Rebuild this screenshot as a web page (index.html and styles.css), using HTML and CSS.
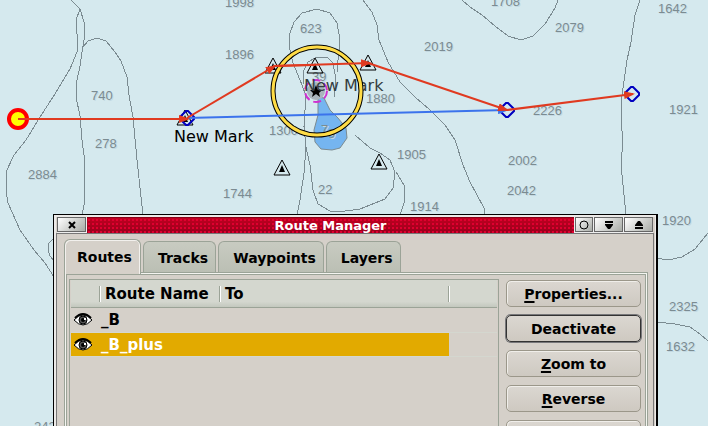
FILE: index.html
```html
<!DOCTYPE html>
<html lang="en">
<head>
<meta charset="utf-8">
<title>Route Manager</title>
<link rel="stylesheet" href="styles.css">
</head>
<body>
<svg class="chart" viewBox="0 0 708 426" preserveAspectRatio="xMinYMin slice" role="img" aria-label="Nautical chart">
  <defs>
    <marker id="head-red" viewBox="0 0 11 8" refX="9" refY="4" markerWidth="11" markerHeight="8" markerUnits="userSpaceOnUse" orient="auto"><path d="M0 0 11 4 0 8Z" fill="#e03a20"/></marker>
    <marker id="head-blue" viewBox="0 0 11 8" refX="9" refY="4" markerWidth="11" markerHeight="8" markerUnits="userSpaceOnUse" orient="auto"><path d="M0 0 11 4 0 8Z" fill="#3b73ec"/></marker>
    <g id="mark"><path class="mark-line" d="M0-8 8 7H-8Z"/><path d="M0-3 3 4H-3Z"/></g>
    <path id="waypoint" class="waypoint" d="M-1-7H1L7-1V1L1 7H-1L-7 1V-1Z"/>
    <g id="eye">
      <path d="M1 7Q10-3 19 7 10 17 1 7Z" fill="#fff" stroke="#000"/>
      <path d="M2 5Q10-3 18 5" fill="none" stroke="#000" stroke-width="2"/>
      <circle cx="10" cy="7" r="4" fill="#555" stroke="#000"/>
      <circle cx="10" cy="7" r="2"/>
      <path d="M11 5h2v2h-2Z" fill="#fff"/>
    </g>
  </defs>

  <path class="shoal" d="M318 97V115L314 130 315 142 321 149 332 150 340 148 347 138 346 128 338 118 330 110 324 98Z"/>
  <g class="contour">
    <path d="M71 0 80 9 76 20V28L78 40 77 52 70 69 55 94 40 117 26 140 14 155 6 172V190L8 203 20 230 34 250 45 263 54 277"/>
    <path d="M80 9 84 22V40L82 52 80 66 76 85V97L80 116 82 140 84 155V205L82 215"/>
    <path d="M83 47 88 41 97 38 106 41 115 52 121 61 127 77 129 95 133 117 137 160 143 215"/>
    <path d="M54 238 49 243 48 250 50 256 54 261"/>
    <path d="M306 96 302 85 293 63 289 45 290 33 294 22 302 13 317 9 330 13 337 23 340 40 338 60 337 72"/>
    <path d="M303 84V72L308 62 317 57H327L333 63 336 80 334 97"/>
    <path d="M306 93 304 127 306 147 304 173 300 200 297 215"/>
    <path d="M306 147 310 165 313 190 318 204 330 211 338 212 360 209 385 199 393 188 395 172 390 160 380 153 370 148 355 135"/>
    <path d="M396 172 404 185V203L400 215"/>
    <path d="M363 0 372 12 377 25 379 40 388 62 400 82 415 97 430 110 445 125 455 140 463 165 470 182 484 208V215"/>
    <path d="M462 0 470 7 482 15 495 26 508 36 521 40 533 36 545 24 555 8 558 0"/>
    <path d="M640 0 635 15 631 42 627 60 623 88 621 105V122L623 140 621 165 624 195 626 215"/>
    <path d="M656 258 668 260 682 257 695 249 708 233"/>
    <path d="M656 322 675 324 690 327 700 334 708 341"/>
  </g>

  <g class="sounding">
    <text x="225" y="7">1998</text><text x="225" y="59">1896</text><text x="300" y="33">623</text>
    <text x="91" y="100">740</text><text x="95" y="148">278</text><text x="28" y="179">2884</text>
    <text x="223" y="198">1744</text><text x="318" y="194">22</text><text x="312" y="81">39</text>
    <text x="366" y="103">1880</text><text x="269" y="135">1300</text><text x="321" y="134">7</text>
    <text x="328" y="138">9</text><text x="397" y="159">1905</text><text x="410" y="211">1914</text>
    <text x="424" y="51">2019</text><text x="491" y="6">1708</text><text x="555" y="32">2079</text>
    <text x="658" y="13">1642</text><text x="533" y="115">2226</text><text x="669" y="114">1921</text>
    <text x="508" y="165">2002</text><text x="507" y="195">2042</text><text x="662" y="225">1920</text>
    <text x="669" y="311">2325</text><text x="666" y="351">1632</text><text x="34" y="431">2427</text>
  </g>

  <circle cx="316" cy="91" r="9" fill="#a9b5bc"/>
  <circle class="light" cx="316" cy="91" r="11"/>
  <path d="M316 85 318 90H322L319 93 320 97 316 94 312 97 313 93 310 90H314Z"/>
  <g class="mark-name"><text x="174" y="142">New Mark</text><text class="mark-name-dim" x="304" y="91">New Mark</text></g>

  <use href="#mark" x="273" y="66"/><use href="#mark" x="315" y="66"/><use href="#mark" x="368" y="63"/>
  <use href="#mark" x="282" y="168"/><use href="#mark" x="379" y="162"/><use href="#mark" x="185" y="118"/>
  <use href="#waypoint" x="187" y="118"/><use href="#waypoint" x="507" y="110"/><use href="#waypoint" x="632" y="94"/>

  <circle cx="317" cy="91" r="44" fill="none" stroke="#000" stroke-width="5"/>
  <circle cx="317" cy="91" r="44" fill="none" stroke="#ffdc46" stroke-width="3"/>
  <circle cx="18" cy="119" r="9" fill="#ff0" stroke="#f00" stroke-width="4"/>
  <path d="M187 118 507 110" stroke="#3b73ec" stroke-width="2" marker-end="url(#head-blue)"/>
  <g class="leg">
    <path d="M18 119H188"/><path d="M187 118 275 66"/><path d="M273 66 315 65"/>
    <path d="M273 66 370 63"/><path d="M368 63 507 110"/><path d="M507 110 633 94"/>
  </g>
</svg>

<main class="window">
  <header class="titlebar">
    <button class="win-btn" type="button" aria-label="Close"><svg width="8" height="8" viewBox="0 0 8 8"><path d="M1 1 7 7M7 1 1 7" stroke="#000" stroke-width="2"/></svg></button>
    <h1 class="title">Route Manager</h1>
    <button class="win-btn win-btn-small" type="button" aria-label="Stick"><svg width="10" height="10" viewBox="0 0 10 10"><circle cx="5" cy="5" r="4" fill="none" stroke="#000"/></svg></button>
    <button class="win-btn" type="button" aria-label="Minimize"><svg width="8" height="8" viewBox="0 0 8 8"><path d="M0 0H8V2H0ZM0 3H8V4L5 8H3L0 4Z"/></svg></button>
    <button class="win-btn" type="button" aria-label="Maximize"><svg width="8" height="8" viewBox="0 0 8 8"><path d="M0 6H8V8H0ZM0 5V4L3 0H5L8 4V5Z"/></svg></button>
  </header>
  <div class="body">
    <nav class="tabs" role="tablist">
      <button class="tab tab-active" type="button" role="tab" aria-selected="true">Routes</button>
      <button class="tab" type="button" role="tab">Tracks</button>
      <button class="tab" type="button" role="tab">Waypoints</button>
      <button class="tab" type="button" role="tab">Layers</button>
    </nav>
    <section class="pane">
      <div class="list">
        <table class="routes">
          <colgroup><col class="col-eye"><col class="col-name"><col class="col-to"><col></colgroup>
          <thead><tr><th></th><th>Route Name</th><th>To</th><th></th></tr></thead>
          <tbody>
            <tr><td><svg class="eye" width="20" height="14" viewBox="0 0 20 14"><use href="#eye"/></svg></td><td>_B</td><td></td><td></td></tr>
            <tr class="selected"><td><svg class="eye" width="20" height="14" viewBox="0 0 20 14"><use href="#eye"/></svg></td><td>_B_plus</td><td></td><td></td></tr>
          </tbody>
        </table>
      </div>
      <div class="actions">
        <button class="action" type="button"><u>P</u>roperties...</button>
        <button class="action action-default" type="button">Deactivate</button>
        <button class="action" type="button"><u>Z</u>oom to</button>
        <button class="action" type="button"><u>R</u>everse</button>
        <button class="action" type="button" aria-label="More"></button>
      </div>
    </section>
  </div>
</main>
</body>
</html>
```
FILE: styles.css
```css
* { box-sizing: border-box; }

body {
  position: relative;
  margin: 0;
  height: 100vh;
  overflow: hidden;
  background: #d5e9ee;
  color: #000;
  font-family: "DejaVu Sans", sans-serif;
}

button { padding: 0; color: inherit; font: inherit; }

/* Chart */
.chart { display: block; width: 100%; height: 100%; }
.contour { fill: none; stroke: #7b8b91; stroke-width: 1; shape-rendering: crispEdges; }
.shoal { fill: #75b5f0; stroke: #7b8b91; }
.sounding {
  fill: #7b8b91;
  font: 13px "Liberation Sans", sans-serif;
  text-shadow: 1px 1px 0 #c3d9e2;
}
.mark-name { font-size: 16px; }
.mark-name-dim { fill: #333c40; }
.mark-line { fill: none; stroke: #000; }
.waypoint { fill: none; stroke: #0000c0; stroke-width: 2; }
.light { fill: none; stroke: #d030d0; stroke-width: 2; stroke-dasharray: 8 4; }
.leg { stroke: #e03a20; stroke-width: 2; }
.leg path { marker-end: url(#head-red); }
.leg path:nth-child(3) { marker-end: none; }

/* Window frame */
.window {
  position: absolute;
  top: 214px;
  bottom: 0;
  left: 53px;
  right: 50px;
  display: flex;
  flex-direction: column;
  overflow: hidden;
  border: solid #000;
  border-width: 1px 2px 0 1px;
  background: #d5d0c9;
  box-shadow: inset 2px 2px 0 #eceae8, inset -1px 0 0 #eceae8;
}
.titlebar {
  display: flex;
  gap: 1px;
  flex: none;
  height: 16px;
  margin: 2px 3px 0;
  background: #eee;
}
.title {
  flex: 1;
  margin: 0;
  border-top: 1px solid #8c0018;
  background: radial-gradient(circle, #e00030 0 1px, transparent 1px) 0 0 / 4px 4px, linear-gradient(#c00020, #98001c);
  color: #fff;
  font-size: 13px;
  line-height: 15px;
  text-align: center;
}
.win-btn {
  display: flex;
  align-items: center;
  justify-content: center;
  width: 29px;
  height: 15px;
  border: 1px solid #666;
  background: linear-gradient(135deg, #fff, #a9aca7);
}
.win-btn-small { width: 18px; }
.body {
  display: flex;
  flex: 1;
  flex-direction: column;
  margin: 0 2px;
  padding: 5px 5px 0 7px;
  border: solid #777;
  border-width: 1px 1px 0;
}

/* Tabs */
.tabs { display: flex; align-items: flex-end; gap: 2px; height: 33px; }
.tab {
  height: 31px;
  padding: 2px 7px 0 14px;
  border: 1px solid #9ba397;
  border-bottom: 0;
  border-radius: 6px 6px 0 0;
  background: linear-gradient(#c8cbc1, #bbbfb4);
  font-size: 14px;
  font-weight: bold;
}
.tab-active {
  z-index: 1;
  height: 35px;
  margin-bottom: -2px;
  padding: 0 8px 0 12px;
  background: #d5d0c9;
  box-shadow: inset 1px 1px 0 #f2f0ed, inset -1px 0 0 #f2f0ed;
}

/* Routes pane */
.pane {
  display: grid;
  grid-template-columns: 1fr 135px;
  gap: 7px;
  flex: 1;
  padding: 5px 6px 0 4px;
  border: solid #9ba397;
  border-width: 1px 1px 0;
  box-shadow: inset 1px 1px 0 #f4f4f0, inset -1px 0 0 #f4f4f0, inset 2px 2px 0 #9ba397, inset -2px 0 0 #9ba397;
}
.list {
  margin-top: 1px;
  padding: 0 1px;
  border: solid #9ba397;
  border-width: 1px 1px 0;
}
.routes {
  width: 100%;
  table-layout: fixed;
  border-collapse: separate;
  border-spacing: 0;
  font-size: 15px;
  font-weight: bold;
}
.col-eye { width: 29px; }
.col-name { width: 120px; }
.col-to { width: 229px; }
.routes th {
  height: 28px;
  padding: 0 5px;
  border-bottom: 1px solid #9ba397;
  background: linear-gradient(#fff, #fff) 0 50% / 1px 16px no-repeat, linear-gradient(#9ba397, #9ba397) 100% 50% / 1px 16px no-repeat, linear-gradient(#d4d7cf 80%, #c3c8be);
  text-align: left;
}
.routes th:first-child { background-position: -1px 50%, 100% 50%, 0 0; }
.routes th:last-child { background-position: 0 50%, 100% -20px, 0 0; }
.routes td {
  height: 24px;
  padding: 0 1px;
  border-bottom: 1px solid #d4d7cf;
}
.routes tbody tr:first-child td { height: 25px; }
.routes tr.selected td:not(:last-child) { background: #e2aa00; color: #fff; }
.eye { display: block; margin-left: 1px; }

/* Action buttons */
.actions { display: flex; flex-direction: column; gap: 8px; margin-top: 2px; }
.action {
  flex: none;
  height: 27px;
  border: 1px solid #9b978a;
  border-radius: 5px;
  background: linear-gradient(#dbd7d1, #cec9c1);
  box-shadow: inset 1px 1px 0 #f0eeea;
  font-size: 14px;
  font-weight: bold;
}
.action-default { border-color: #333; box-shadow: 0 0 0 1px #77777a; }
.action u { text-decoration-thickness: 2px; text-underline-offset: 2px; }
```
